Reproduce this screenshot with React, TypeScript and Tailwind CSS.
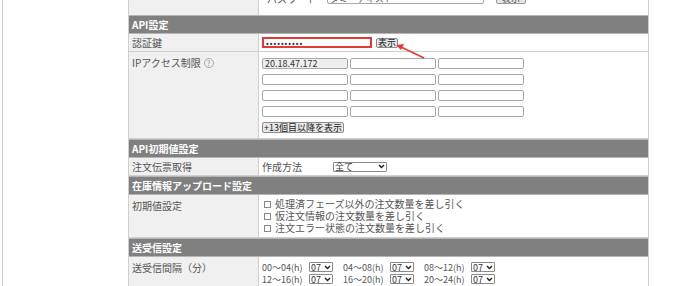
import React from "react";

const font = { fontFamily: "'Noto Sans CJK JP', 'DejaVu Sans', sans-serif" };

function Header({ children }: { children: React.ReactNode }) {
  return (
    <div className="shrink-0 h-[19px] bg-[#808080] border-t border-b border-[#b5b5b5] flex items-center pl-[3px] text-white font-bold text-[10px] leading-none">
      {children}
    </div>
  );
}

function Row({
  label,
  h,
  children,
  labelTop,
}: {
  label: React.ReactNode;
  h: string;
  children?: React.ReactNode;
  labelTop?: boolean;
}) {
  return (
    <div className={`shrink-0 grid grid-cols-[130px_1fr] border-b border-[#cfcfcf] ${h}`}>
      <div
        className={`bg-[#f0f0f0] border-r border-[#cfcfcf] pl-[3px] text-[10px] text-[#555] flex ${
          labelTop ? "items-start pt-[3px]" : "items-center"
        }`}
      >
        {label}
      </div>
      <div className="bg-white pl-[3px] text-[10px] text-[#555]">{children}</div>
    </div>
  );
}

function Inp({ value, filled }: { value?: string; filled?: boolean }) {
  return (
    <div
      className={`w-[86px] h-[11px] rounded-[2px] border border-[#a8a8a8] text-[9px] leading-[9px] pl-[2px] text-[#333] ${
        filled ? "bg-[#eeeeee]" : "bg-white"
      }`}
    >
      {value}
    </div>
  );
}

function Sel({ v, w }: { v: string; w: string }) {
  return (
    <div
      className={`${w} h-[10px] border border-[#8a8a8a] rounded-[1px] bg-white flex items-center justify-between px-[1px] text-[9px] leading-none text-[#333]`}
    >
      <span>{v}</span>
      <svg width="7" height="5" viewBox="0 0 7 5">
        <path d="M1 1 L3.5 3.5 L6 1" stroke="#222" strokeWidth="1.4" fill="none" />
      </svg>
    </div>
  );
}

export default function App() {
  return (
    <div className="w-[688px] h-[286px] overflow-hidden bg-white flex relative" style={font}>
      <div className="w-[2px]" />
      <div className="w-[1px] bg-[#cfcfcf]" />
      <div className="w-[125px]" />
      <div className="w-[521px] border-l border-r border-[#cfcfcf] flex flex-col">
        {/* partial top row */}
        <div className="shrink-0 grid grid-cols-[130px_1fr] h-[15px] overflow-hidden">
          <div className="bg-[#f0f0f0] border-r border-[#cfcfcf]" />
          <div className="bg-white relative">
            <div className="flex items-center gap-[4px] -mt-[9px] pl-[8px] text-[10px] text-[#555]">
              <span className="w-[56px]">パスワード</span>
              <div className="w-[157px] h-[11px] border border-[#a8a8a8] rounded-[2px] text-[9px] leading-[9px] pl-[2px]">
                ダミーテキスト
              </div>
              <div className="ml-[8px] w-[30px] h-[11px] border border-[#999] rounded-[2px] bg-[#e5e5e5] text-[9px] leading-[9px] text-center">
                表示
              </div>
            </div>
          </div>
        </div>

        <Header>API設定</Header>

        <Row label="認証鍵" h="h-[18px]">
          <div className="flex items-center h-full gap-[4px]">
            <div className="w-[110px] h-[11px] border-2 border-[#e53935] flex items-center pl-[2px] text-[8px] tracking-[1px] text-[#333] leading-none">
              ••••••••••
            </div>
            <div className="w-[22px] h-[10px] border border-[#8a8a8a] rounded-[2px] bg-[#e8e8e8] text-[9px] leading-[8px] text-center text-[#222]">
              表示
            </div>
          </div>
        </Row>

        <Row
          label={
            <span className="flex items-center gap-[3px]">
              IPアクセス制限
              <span className="w-[10px] h-[10px] rounded-full border border-[#aaa] text-[7px] leading-[8px] text-center text-[#888]">
                ?
              </span>
            </span>
          }
          h="h-[87px]"
          labelTop
        >
          <div className="pt-[6px] flex flex-col gap-[5px]">
            {[0, 1, 2, 3].map((r) => (
              <div key={r} className="flex gap-[2px]">
                <Inp value={r === 0 ? "20.18.47.172" : ""} filled={r === 0} />
                <Inp />
                <Inp />
              </div>
            ))}
            <div className="w-[82px] h-[11px] border border-[#8a8a8a] rounded-[2px] bg-[#e8e8e8] text-[9px] leading-[9px] text-[#222] whitespace-nowrap pl-[1px]">
              +13個目以降を表示
            </div>
          </div>
        </Row>

        <Header>API初期値設定</Header>

        <Row label="注文伝票取得" h="h-[18px]">
          <div className="flex items-center h-full">
            <span className="w-[71px]">作成方法</span>
            <Sel v="全て" w="w-[54px]" />
          </div>
        </Row>

        <Header>在庫情報アップロード設定</Header>

        <Row label="初期値設定" h="h-[43px]" labelTop>
          <div className="pt-[3px] flex flex-col pl-[2px]">
            {["処理済フェーズ以外の注文数量を差し引く", "仮注文情報の注文数量を差し引く", "注文エラー状態の注文数量を差し引く"].map((t) => (
              <div key={t} className="flex items-center gap-[4px] h-[12px]">
                <div className="w-[7px] h-[7px] border border-[#888] bg-white" />
                <span className="leading-none">{t}</span>
              </div>
            ))}
          </div>
        </Row>

        <Header>送受信設定</Header>

        <Row label="送受信間隔（分）" h="h-[40px]" labelTop>
          <div className="pt-[5px] flex flex-col gap-[2px]">
            {[
              ["00〜04(h)", "04〜08(h)", "08〜12(h)"],
              ["12〜16(h)", "16〜20(h)", "20〜24(h)"],
            ].map((line, i) => (
              <div key={i} className="flex items-center h-[10px] leading-none">
                {line.map((t) => (
                  <div key={t} className="flex items-center">
                    <span className="w-[47px] text-[9px]">{t}</span>
                    <Sel v="07" w="w-[24px]" />
                    <span className="w-[10px]" />
                  </div>
                ))}
              </div>
            ))}
          </div>
        </Row>
      </div>

      {/* red arrow */}
      <svg className="absolute left-[392px] top-[40px]" width="36" height="22" viewBox="0 0 36 22">
        <line x1="32" y1="18" x2="7" y2="6" stroke="#e53935" strokeWidth="1.6" />
        <path d="M4 5 L12 4 L9 10 Z" fill="#e53935" />
      </svg>
    </div>
  );
}
